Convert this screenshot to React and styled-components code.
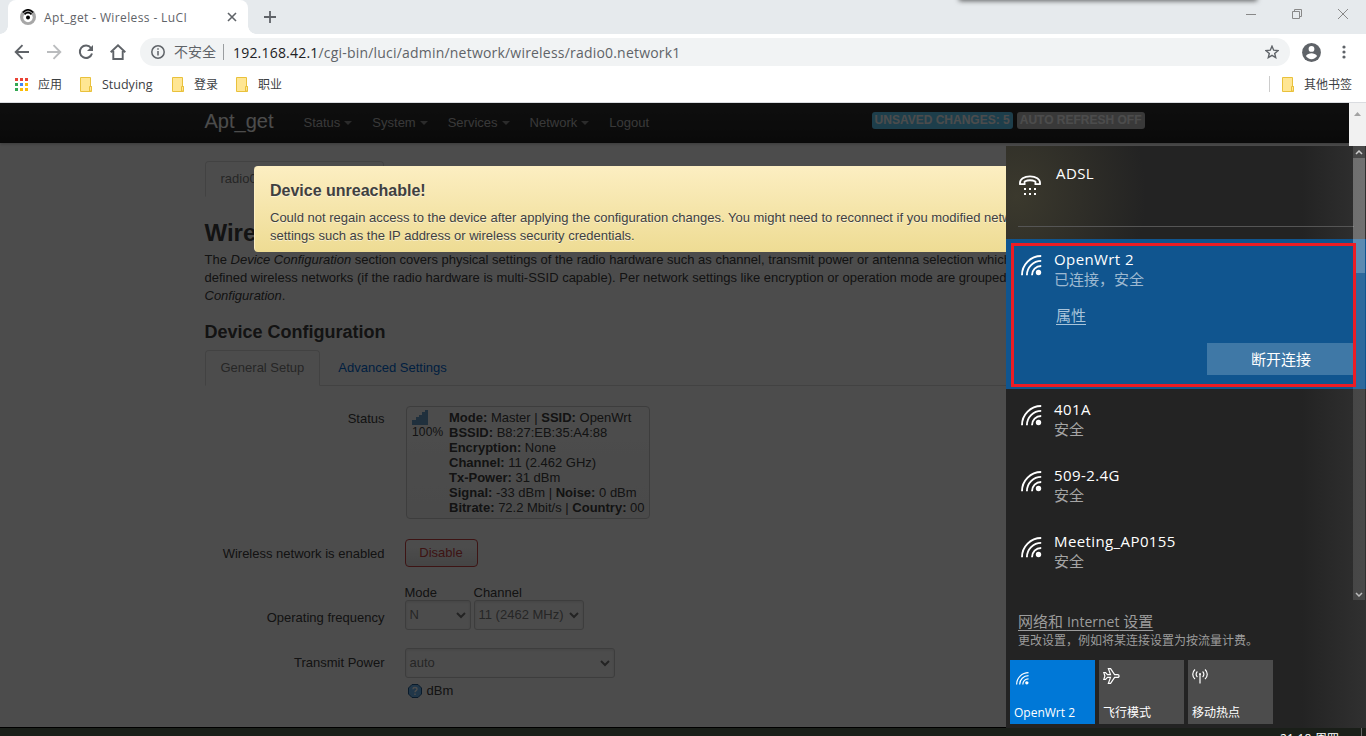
import React from 'react';
import styled, { createGlobalStyle } from 'styled-components';

const GlobalStyle = createGlobalStyle`
  * { box-sizing: border-box; }
  body { margin: 0; overflow: hidden; }
  h2, h3, h4, p { margin: 0; }
`;

const ui = `'Open Sans', 'Noto Sans CJK SC', sans-serif`;

const WifiIcon = ({ size = 21, stroke = 1.9 }) => (
  <svg width={size} height={size} viewBox="0 0 21 21" fill="none" stroke="#fff" strokeWidth={stroke}>
    <path d="M1 20.200C1 9.600 9.600 1 20.200 1" />
    <path d="M5.900 20.200c0-7.900 6.400-14.300 14.300-14.300" />
    <path d="M11 20.200c0-5.200 4-9.200 9.200-9.200" />
    <circle cx="17.500" cy="17.500" r="2.700" fill="#fff" stroke="none" />
  </svg>
);

const Folder = () => (
  <svg width="12" height="15" viewBox="0 0 12 15">
    <path d="M.5.5h10v9h1v5H.5z" fill="#ffe693" stroke="#e9c13c" />
    <path d="M9.500 14v-4.500h2V14z" fill="#ffe693" stroke="#e9c13c" />
  </svg>
);

const networks = ['401A', '509-2.4G', 'Meeting_AP0155'];
const menu = ['Status', 'System', 'Services', 'Network'];
const appColors = ['#ea4335', '#ea4335', '#ea4335', '#34a853', '#4285f4', '#fbbc05', '#34a853', '#fbbc05', '#fbbc05'];

const ChromeTop = () => (
  <>
    <TabStrip>
      <BrowserTab>
        <svg width="16" height="16" viewBox="0 0 16 16">
          <circle cx="8" cy="8" r="8" fill="#a7a7a7" />
          <circle cx="8" cy="8.500" r="4.700" fill="#fff" />
          <circle cx="8" cy="8.500" r="2" />
          <path d="M2.800 3.500Q8-2 13.200 3.500M4.500 5.400Q8 2 11.500 5.400" fill="none" stroke="#000" strokeWidth="1.600" />
        </svg>
        <TabTitle>Apt_get - Wireless - LuCI</TabTitle>
        <svg width="10" height="10" viewBox="0 0 10 10" stroke="#5f6368" strokeWidth="1.600">
          <path d="M1 1l8 8M9 1L1 9" />
        </svg>
      </BrowserTab>
      <NewTab width="12" height="12" viewBox="0 0 12 12" stroke="#5f6368" strokeWidth="1.800">
        <path d="M6 0v12M0 6h12" />
      </NewTab>
      <TopShadow />
      <WindowButtons>
        <svg width="10" height="10" viewBox="0 0 10 10" fill="none" stroke="#888"><path d="M0 5.500h10" /></svg>
        <svg width="10" height="10" viewBox="0 0 10 10" fill="none" stroke="#888"><path d="M.5 2.500h7v7h-7zM2.500 2.500v-2h7v7h-2" /></svg>
        <svg width="10" height="10" viewBox="0 0 10 10" fill="none" stroke="#888"><path d="M0 0l10 10M10 0L0 10" /></svg>
      </WindowButtons>
    </TabStrip>
    <Toolbar>
      <ToolIcons>
        <svg width="16" height="16" viewBox="0 0 16 16" fill="none" stroke="#5f6368" strokeWidth="1.900"><path d="M15 8H2M8.500 1.200L1.700 8l6.800 6.800" /></svg>
        <svg width="16" height="16" viewBox="0 0 16 16" fill="none" stroke="#babcbe" strokeWidth="1.900"><path d="M1 8h13M7.500 1.200L14.300 8l-6.800 6.800" /></svg>
        <svg width="16" height="16" viewBox="0 0 16 16" fill="none" stroke="#5f6368" strokeWidth="2">
          <path d="M13 4A6.200 6.200 0 1 0 14 9.500" />
          <path d="M15 1v6H9z" fill="#5f6368" stroke="none" />
        </svg>
        <svg width="16" height="16" viewBox="0 0 16 16" fill="none" stroke="#5f6368" strokeWidth="1.900"><path d="M.7 8.300L8 1.300l7.300 7M3.300 7v8h9.400V7" /></svg>
      </ToolIcons>
      <AddressBar>
        <svg width="14" height="14" viewBox="0 0 14 14" fill="none" stroke="#5f6368" strokeWidth="1.500">
          <circle cx="7" cy="7" r="6.200" />
          <path d="M7 6v4.500M7 3.300v1.500" />
        </svg>
        <Insecure>不安全</Insecure>
        <Url><b>192.168.42.1</b>/cgi-bin/luci/admin/network/wireless/radio0.network1</Url>
        <svg width="14" height="14" viewBox="0 0 14 14" fill="none" stroke="#5f6368" strokeWidth="1.400">
          <path d="M7 1.200l1.700 4 4.300.4-3.300 2.800 1 4.200L7 10.400l-3.700 2.200 1-4.200L1 5.600l4.300-.4z" />
        </svg>
      </AddressBar>
      <Account width="19" height="19" viewBox="0 0 19 19">
        <circle cx="9.500" cy="9.500" r="9.400" fill="#5f6368" />
        <circle cx="9.500" cy="5.900" r="2.900" fill="#fff" />
        <path d="M3.900 13c1-1.900 3.800-2.800 5.600-2.800s4.600.9 5.600 2.800c-1.200 1.900-3.400 3.200-5.600 3.200S5.100 14.900 3.900 13z" fill="#fff" />
      </Account>
      <svg width="4" height="14" viewBox="0 0 4 14" fill="#5f6368">
        <circle cx="2" cy="2" r="1.600" /><circle cx="2" cy="7" r="1.600" /><circle cx="2" cy="12" r="1.600" />
      </svg>
    </Toolbar>
    <Bookmarks>
      <AppsGrid>{appColors.map((c, i) => <AppsDot key={i} $color={c} />)}</AppsGrid>
      <Bookmark $w={52}>应用</Bookmark>
      <Folder /><Bookmark $w={80} $latin>Studying</Bookmark>
      <Folder /><Bookmark $w={52}>登录</Bookmark>
      <Folder /><Bookmark $w={52}>职业</Bookmark>
      <OtherBookmarks><Folder /><span>其他书签</span></OtherBookmarks>
    </Bookmarks>
  </>
);

const Chevron = () => (
  <svg width="10" height="7" viewBox="0 0 10 7" fill="none" stroke="#777" strokeWidth="2"><path d="M1 1l4 4 4-4" /></svg>
);

const LuciPage = () => (
  <Page>
    <NavBar>
      <NavInner>
        <Brand>Apt_get</Brand>
        {menu.map((m) => <NavLink key={m}>{m}<Caret /></NavLink>)}
        <NavLink>Logout</NavLink>
        <Labels>
          <Label $info>UNSAVED CHANGES: 5</Label>
          <Label>AUTO REFRESH OFF</Label>
        </Labels>
      </NavInner>
    </NavBar>
    <Main>
      <DeviceTabs><Tab $active $w={179}>radio0: Master "OpenWrt"</Tab></DeviceTabs>
      <Title>Wireless Network</Title>
      <Description>
        The <em>Device Configuration</em> section covers physical settings of the radio hardware such as channel, transmit power or antenna selection which are shared among all defined wireless networks (if the radio hardware is multi-SSID capable). Per network settings like encryption or operation mode are grouped in the <em>Interface Configuration</em>.
      </Description>
      <Section>Device Configuration</Section>
      <SetupTabs>
        <Tab $active>General Setup</Tab>
        <Tab>Advanced Settings</Tab>
      </SetupTabs>
      <Row $h={133}>
        <RowLabel $top={4}>Status</RowLabel>
        <StatusBox>
          <Signal>
            <svg width="16" height="15" viewBox="0 0 16 15" fill="#6ba0cc">
              <path d="M0 10h4v5H0zM4 7h3v8H4zM7 5h3v10H7zM10 2h3v13h-3zM13 0h3v15h-3z" />
            </svg>
            <span>100%</span>
          </Signal>
          <div>
            <b>Mode:</b> Master | <b>SSID:</b> OpenWrt<br />
            <b>BSSID:</b> B8:27:EB:35:A4:88<br />
            <b>Encryption:</b> None<br />
            <b>Channel:</b> 11 (2.462 GHz)<br />
            <b>Tx-Power:</b> 31 dBm<br />
            <b>Signal:</b> -33 dBm | <b>Noise:</b> 0 dBm<br />
            <b>Bitrate:</b> 72.2 Mbit/s | <b>Country:</b> 00
          </div>
        </StatusBox>
      </Row>
      <Row $h={45}>
        <RowLabel>Wireless network is enabled</RowLabel>
        <DisableButton>Disable</DisableButton>
      </Row>
      <Row $h={64}>
        <RowLabel $top={25}>Operating frequency</RowLabel>
        <Frequency>
          <div><Caption>Mode</Caption><Select $w={66}>N<Chevron /></Select></div>
          <div><Caption>Channel</Caption><Select $w={110}>11 (2462 MHz)<Chevron /></Select></div>
        </Frequency>
      </Row>
      <Row $h={60}>
        <RowLabel>Transmit Power</RowLabel>
        <div>
          <Select $w={210}>auto<Chevron /></Select>
          <Hint>
            <svg width="14" height="14" viewBox="0 0 14 14">
              <path d="M4 .5h6L13.500 4v6L10 13.500H4L.5 10V4z" fill="#70b8f5" stroke="#225a90" />
              <path d="M4.900 5.200C5 3 9 3 9 5.200c0 1.500-2 1.400-2 3M7 9.500v1.500" fill="none" stroke="#fff" strokeWidth="1.400" />
            </svg>
            dBm
          </Hint>
        </div>
      </Row>
    </Main>
    <Overlay>
      <Alert>
        <h4>Device unreachable!</h4>
        <p>Could not regain access to the device after applying the configuration changes. You might need to reconnect if you modified network related settings such as the IP address or wireless security credentials.</p>
      </Alert>
    </Overlay>
  </Page>
);

const NetworkFlyout = () => (
  <Flyout>
    <Adsl>
      <svg width="22" height="21" viewBox="0 0 22 21" fill="none" stroke="#fff" strokeWidth="1.800">
        <path d="M1 9.200C-.5-1.300 22.500-1.300 21 9.200h-4.600V6.500c-3.200-1.500-7.600-1.500-10.800 0v2.700z" />
        <path d="M5 14h2m3 0h2m3 0h2M5 19h2m3 0h2m3 0h2" strokeWidth="2" />
      </svg>
      <NetName>ADSL</NetName>
    </Adsl>
    <Connected>
      <WifiIcon />
      <div>
        <NetName>OpenWrt 2</NetName>
        <NetState>已连接，安全</NetState>
        <Properties>属性</Properties>
      </div>
      <Disconnect>断开连接</Disconnect>
      <Marker />
    </Connected>
    {networks.map((n) => (
      <Network key={n}>
        <WifiIcon />
        <div>
          <NetName>{n}</NetName>
          <NetState>安全</NetState>
        </div>
      </Network>
    ))}
    <Settings>
      <SettingsLink>网络和 <i>Internet</i> 设置</SettingsLink>
      <SettingsText>更改设置，例如将某连接设置为按流量计费。</SettingsText>
    </Settings>
    <Tiles>
      <Tile $on>
        <WifiIcon size={13} />
        <TileName>OpenWrt 2</TileName>
      </Tile>
      <Tile>
        <svg width="17" height="16" viewBox="0 0 17 16" fill="none" stroke="#fff" strokeWidth="1.200">
          <path d="M.8 4.500h1.700L4.500 6.600h3L5.400.7h2.200l4 5.900h3c2 0 2 2.800 0 2.800h-3l-4 5.900H5.400l2.100-5.900h-3l-2 2.100H.8L1.900 8z" />
        </svg>
        <TileName>飞行模式</TileName>
      </Tile>
      <Tile>
        <svg width="16" height="16" viewBox="0 0 16 16" fill="none" stroke="#fff" strokeWidth="1.200">
          <path d="M8 6v9.500M3 1.500c-3 2.500-3 7 0 9.500M13 1.500c3 2.500 3 7 0 9.500M5.400 3.500c-1.700 1.500-1.700 4 0 5.500M10.600 3.500c1.700 1.500 1.700 4 0 5.500" />
          <circle cx="8" cy="6" r="1" fill="#fff" stroke="none" />
        </svg>
        <TileName>移动热点</TileName>
      </Tile>
    </Tiles>
    <FlyoutScroll>
      <ScrollArrow><svg width="8" height="5" viewBox="0 0 8 5" fill="none" stroke="#ccc" strokeWidth="1.500"><path d="M1 4l3-3 3 3" /></svg></ScrollArrow>
      <ScrollThumb />
      <ScrollArrow><svg width="8" height="5" viewBox="0 0 8 5" fill="none" stroke="#bbb" strokeWidth="1.500"><path d="M1 1l3 3 3-3" /></svg></ScrollArrow>
    </FlyoutScroll>
  </Flyout>
);

export default function App() {
  return (
    <Screen>
      <GlobalStyle />
      <ChromeTop />
      <Viewport>
        <LuciPage />
        <PageScroll>
          <svg width="7" height="4" viewBox="0 0 7 4" fill="#a3a3a3"><path d="M0 4l3.500-4L7 4z" /></svg>
        </PageScroll>
      </Viewport>
      <Taskbar><Clock>21:18 周四</Clock><ShowDesktop /></Taskbar>
      <NetworkFlyout />
    </Screen>
  );
}

const Screen = styled.div`
  width: 1366px;
  height: 736px;
  position: relative;
  overflow: hidden;
  display: flex;
  flex-direction: column;
  background: #fff;
  font-family: ${ui};
`;

const TabStrip = styled.div`
  height: 34px;
  flex: none;
  display: flex;
  align-items: center;
  background: #e6eaed;
  padding-left: 8px;
`;

const BrowserTab = styled.div`
  width: 240px;
  height: 34px;
  position: relative;
  display: flex;
  align-items: center;
  padding: 0 11px 0 12px;
  background: #fff;
  border-radius: 8px 8px 0 0;

  &::before, &::after {
    content: '';
    position: absolute;
    bottom: 0;
    width: 8px;
    height: 8px;
  }
  &::before {
    left: -8px;
    background: radial-gradient(circle at 0 0, #e6eaed 7.500px, #fff 8px);
  }
  &::after {
    right: -8px;
    background: radial-gradient(circle at 100% 0, #e6eaed 7.500px, #fff 8px);
  }
`;

const TabTitle = styled.span`
  flex: 1;
  margin-left: 8px;
  font-size: 12px;
  letter-spacing: 0.38px;
  color: #5f6368;
  white-space: nowrap;
`;

const NewTab = styled.svg`
  margin-left: 16px;
`;

const TopShadow = styled.div`
  position: absolute;
  left: 960px;
  top: -4px;
  width: 296px;
  height: 4px;
  box-shadow: 0 0 5px 1px rgba(0, 0, 0, 0.6);
`;

const WindowButtons = styled.div`
  margin: -6px 18px 0 auto;
  display: flex;
  gap: 36px;
`;

const Toolbar = styled.div`
  height: 36px;
  flex: none;
  display: flex;
  align-items: center;
  padding-left: 14px;
`;

const ToolIcons = styled.div`
  width: 126px;
  display: flex;
  gap: 16px;
`;

const AddressBar = styled.div`
  width: 1150px;
  height: 28px;
  display: flex;
  align-items: center;
  padding: 0 11px;
  background: #f1f3f4;
  border-radius: 14px;
`;

const Insecure = styled.span`
  margin-left: 9px;
  padding-right: 7px;
  width: 50px;
  line-height: 16px;
  border-right: 1px solid #9a9da0;
  font-size: 14px;
  color: #5f6368;
  white-space: nowrap;
`;

const Url = styled.span`
  flex: 1;
  margin-left: 9px;
  font-size: 14px;
  letter-spacing: 0.2px;
  color: #5f6368;

  b {
    font-weight: 400;
    color: #202124;
  }
`;

const Account = styled.svg`
  margin: 0 21px 0 12px;
`;

const Bookmarks = styled.div`
  height: 33px;
  flex: none;
  display: flex;
  align-items: center;
  padding: 0 14px 4px 15px;
  border-bottom: 1px solid #dadce0;
  font-size: 12px;
  color: #3c4043;
`;

const AppsGrid = styled.div`
  display: grid;
  grid-template-columns: repeat(3, 3px);
  gap: 2px;
`;

const AppsDot = styled.i`
  height: 3px;
  background: ${(p) => p.$color};
`;

const Bookmark = styled.span`
  width: ${(p) => p.$w}px;
  padding-left: 10px;
  font-size: ${(p) => (p.$latin ? 12.5 : 12)}px;
  white-space: nowrap;
`;

const OtherBookmarks = styled.div`
  margin-left: auto;
  height: 16px;
  display: flex;
  align-items: center;
  gap: 10px;
  padding-left: 12px;
  border-left: 1px solid #ccc;
`;

const Viewport = styled.div`
  height: 624px;
  flex: none;
  display: flex;
`;

const Page = styled.div`
  width: 1349px;
  position: relative;
  overflow: hidden;
  background: #fff;
  font-family: 'Liberation Sans', sans-serif;
  font-size: 13px;
  line-height: 18px;
  color: #404040;
`;

const NavBar = styled.div`
  height: 40px;
  background: linear-gradient(#333, #222);
  box-shadow: 0 1px 3px rgba(0, 0, 0, 0.25), inset 0 -1px 0 rgba(0, 0, 0, 0.1);
`;

const NavInner = styled.div`
  width: 940px;
  height: 40px;
  margin: 0 auto;
  display: flex;
  align-items: center;
`;

const Brand = styled.span`
  width: 89px;
  margin-top: -4px;
  font-size: 20px;
  color: #fff;
`;

const NavLink = styled.span`
  padding: 0 10px;
  display: flex;
  align-items: center;
  color: #bfbfbf;
`;

const Caret = styled.i`
  margin-left: 4px;
  border: 4px solid transparent;
  border-top-color: #8f8f8f;
  border-bottom: 0;
`;

const Labels = styled.div`
  margin: -5px 0 0 auto;
  display: flex;
  gap: 4px;
`;

const Label = styled.span`
  height: 17px;
  padding: 0 3px;
  border-radius: 3px;
  background: ${(p) => (p.$info ? '#62cffc' : '#bfbfbf')};
  color: #fff;
  font-size: 12px;
  font-weight: bold;
  line-height: 16px;
  white-space: nowrap;
`;

const Main = styled.div`
  width: 940px;
  margin: 18px auto 0;
`;

const Tab = styled.span`
  height: 36px;
  width: ${(p) => (p.$w ? p.$w + 'px' : 'auto')};
  margin-right: 2px;
  padding: 0 15px;
  border: 1px solid ${(p) => (p.$active ? '#ddd' : 'transparent')};
  border-bottom-color: ${(p) => (p.$active ? '#fff' : 'transparent')};
  border-radius: 4px 4px 0 0;
  line-height: 34px;
  color: ${(p) => (p.$active ? '#808080' : '#0069d6')};
  white-space: nowrap;
`;

const DeviceTabs = styled.div`
  height: 54px;
  display: flex;
`;

const SetupTabs = styled.div`
  height: 36px;
  margin-bottom: 20px;
  display: flex;
  box-shadow: inset 0 -1px #ddd;
`;

const Title = styled.h2`
  font-size: 24px;
  line-height: 36px;
`;

const Description = styled.p`
  height: 66px;
`;

const Section = styled.h3`
  height: 33px;
  font-size: 18px;
  line-height: 31px;
`;

const Row = styled.div`
  height: ${(p) => p.$h}px;
  display: flex;
  align-items: flex-start;
`;

const RowLabel = styled.span`
  width: 180px;
  margin-right: 20px;
  padding-top: ${(p) => p.$top ?? 6}px;
  text-align: right;
`;

const StatusBox = styled.div`
  width: 244px;
  height: 113px;
  margin-left: 1px;
  padding: 3px 0 0 5.5px;
  display: flex;
  border: 1px solid #ccc;
  border-radius: 4px;
  background: linear-gradient(#fff, #f8f8f8);
  line-height: 15px;
  white-space: nowrap;
`;

const Signal = styled.div`
  width: 37px;
  font-size: 12px;
  letter-spacing: 0.2px;

  svg, span {
    display: block;
  }
  svg {
    margin-left: -0.5px;
  }
`;

const DisableButton = styled.button`
  width: 73px;
  height: 28px;
  padding: 0 0 2px;
  border: 1px solid #c44;
  border-radius: 4px;
  background: linear-gradient(#fff, #fff 25%, #e6e6e6);
  font: 13px 'Liberation Sans', sans-serif;
  color: #c44;
`;

const Frequency = styled.div`
  display: flex;
  gap: 3px;
`;

const Caption = styled.div`
  height: 16px;
`;

const Select = styled.div`
  width: ${(p) => p.$w}px;
  height: 30px;
  padding: 0 4px;
  display: flex;
  align-items: center;
  justify-content: space-between;
  border: 1px solid #ccc;
  border-radius: 3px;
  box-shadow: inset 0 1px 3px rgba(0, 0, 0, 0.1);
  color: #808080;
`;

const Hint = styled.div`
  display: flex;
  align-items: center;
  gap: 5px;
  padding: 4px 0 0 3px;
`;

const Overlay = styled.div`
  position: absolute;
  inset: 0;
  display: flex;
  justify-content: center;
  align-items: flex-start;
  padding-top: 63px;
  background: rgba(0, 0, 0, 0.7);
`;

const Alert = styled.div`
  width: 841px;
  height: 86px;
  padding: 7px 15px;
  border-radius: 4px;
  border: 1px solid;
  border-color: #fceec1 #fceec1 #eedc94;
  background: linear-gradient(#fceec1, #eedc94);
  text-shadow: 0 1px 0 rgba(255, 255, 255, 0.5);

  h4 {
    font-size: 16px;
    line-height: 34px;
    margin-bottom: 1px;
  }
`;

const PageScroll = styled.div`
  width: 17px;
  padding-top: 7px;
  background: #f1f1f1;
  line-height: 0;
  text-align: center;
`;

const Taskbar = styled.div`
  height: 9px;
  flex: none;
  display: flex;
  justify-content: flex-end;
  border-top: 1px solid #000;
  background: #1a1f19;
  overflow: hidden;
`;

const Clock = styled.span`
  width: 81px;
  font-size: 12px;
  letter-spacing: 0.2px;
  line-height: 21px;
  color: #fff;
  white-space: nowrap;
`;

const ShowDesktop = styled.span`
  width: 5px;
  border-left: 1px solid #666;
`;

const Flyout = styled.div`
  position: absolute;
  left: 1006px;
  top: 146px;
  width: 360px;
  height: 582px;
  display: flex;
  flex-direction: column;
  background:
    radial-gradient(ellipse 130px 150px at 10px 50px, #3b392d, rgba(35, 35, 35, 0)),
    linear-gradient(90deg, #232323 82%, #303030);
  color: #fff;
`;

const NetName = styled.div`
  font-size: 15px;
  letter-spacing: 0.4px;
  line-height: 20px;
  white-space: nowrap;
`;

const NetState = styled.div`
  font-size: 15px;
  line-height: 20px;
  color: rgba(255, 255, 255, 0.6);
`;

const Adsl = styled.div`
  height: 81px;
  margin: 0 12px 12px 12px;
  padding: 17px 0 0 1px;
  display: flex;
  gap: 15px;
  border-bottom: 1px solid #555;

  svg {
    margin-top: 12px;
  }
`;

const Connected = styled.div`
  height: 150px;
  position: relative;
  display: flex;
  gap: 12px;
  padding: 10px 0 0 15px;
  background: #10558f;

  > svg {
    margin-top: 6px;
  }
`;

const Properties = styled.div`
  width: fit-content;
  margin: 15px 0 0 2px;
  font-size: 15px;
  line-height: 22px;
  color: #a9c4da;
  text-decoration: underline;
  text-underline-offset: 3px;
`;

const Disconnect = styled.button`
  width: 146px;
  height: 32px;
  margin: 94px 13px 0 auto;
  padding: 0 0 2px 2px;
  border: 0;
  background: #3f78a6;
  font: 15px ${ui};
  color: #fff;
`;

const Marker = styled.div`
  position: absolute;
  z-index: 1;
  left: 5px;
  top: 4px;
  width: 345px;
  height: 144px;
  border: 3px solid #ed1c24;
`;

const Network = styled.div`
  height: 66px;
  padding: 10px 0 0 15px;
  display: flex;
  gap: 12px;

  svg {
    margin-top: 6px;
  }
`;

const Settings = styled.div`
  height: 73px;
  padding: 24px 0 0 12px;
  color: #9c9c9c;
`;

const SettingsLink = styled.div`
  font-size: 15px;
  line-height: 21px;
  text-decoration: underline;
  text-underline-offset: 3px;

  i {
    font-style: normal;
    font-size: 14px;
  }
`;

const SettingsText = styled.div`
  font-size: 12px;
  line-height: 18px;
`;

const Tiles = styled.div`
  padding-left: 4px;
  display: flex;
  gap: 4px;
`;

const Tile = styled.div`
  width: 85px;
  height: 64px;
  padding: 8px 4px 3px;
  display: flex;
  flex-direction: column;
  justify-content: space-between;
  background: ${(p) => (p.$on ? '#0078d7' : '#4c4c4c')};

  svg {
    margin: ${(p) => (p.$on ? '4px 0 0 2px' : '0')};
  }
`;

const TileName = styled.span`
  font-size: 12px;
  line-height: 16px;
  white-space: nowrap;
`;

const FlyoutScroll = styled.div`
  position: absolute;
  left: 347px;
  top: 0;
  width: 12px;
  height: 454px;
  display: flex;
  flex-direction: column;
  background: rgba(255, 255, 255, 0.12);
`;

const ScrollArrow = styled.div`
  height: 12px;
  display: flex;
  align-items: center;
  justify-content: center;
`;

const ScrollThumb = styled.div`
  height: 115px;
  margin-bottom: auto;
  background: rgba(255, 255, 255, 0.22);
`;
